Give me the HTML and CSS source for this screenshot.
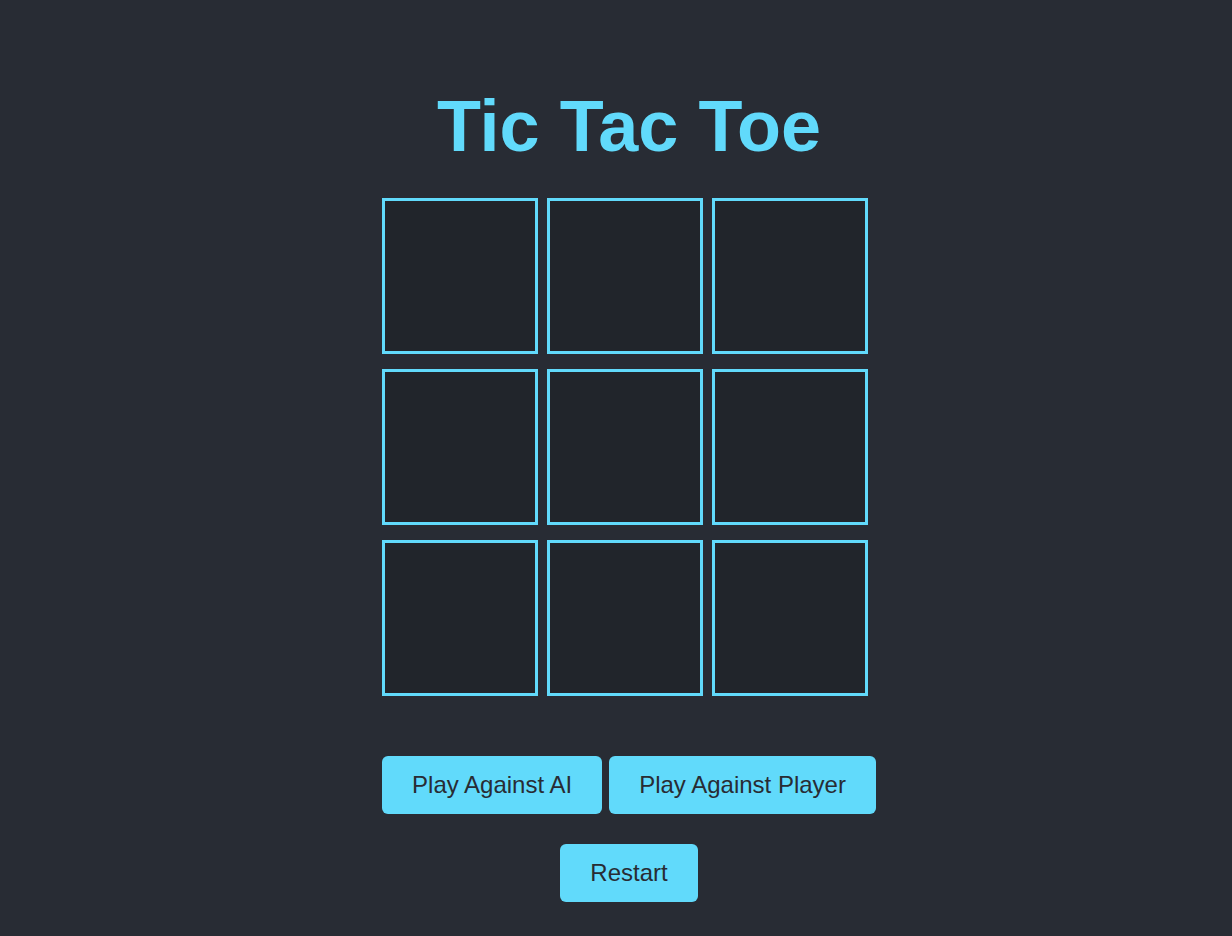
FILE: index.html
```html
<!DOCTYPE html>
<html lang="en">
<head>
<meta charset="utf-8">
<title>Tic Tac Toe</title>
<link rel="stylesheet" href="styles.css">
</head>
<body>
<main class="game">
  <h1 class="title">Tic Tac Toe</h1>
  <div class="board">
    <div class="cell"></div><div class="cell"></div><div class="cell"></div>
    <div class="cell"></div><div class="cell"></div><div class="cell"></div>
    <div class="cell"></div><div class="cell"></div><div class="cell"></div>
  </div>
  <div class="modes">
    <button class="btn">Play Against AI</button>
    <button class="btn">Play Against Player</button>
  </div>
  <div class="controls">
    <button class="btn">Restart</button>
  </div>
</main>
</body>
</html>
```

FILE: styles.css
```css
html, body {
  margin: 0;
  height: 100%;
}
body {
  background: #282c34;
  font-family: "Liberation Sans", Arial, sans-serif;
  padding-left: 26px;
  box-sizing: border-box;
}
.game {
  display: flex;
  flex-direction: column;
  align-items: center;
}
.title {
  margin: 85px 0 0;
  font-size: 72px;
  font-weight: bold;
  color: #61dafb;
  line-height: normal;
}
.board {
  margin-top: 31px;
  display: grid;
  grid-template-columns: repeat(3, 156px);
  column-gap: 9px;
  row-gap: 15px;
  margin-left: -8px;
}
.cell {
  width: 156px;
  height: 156px;
  box-sizing: border-box;
  border: 3px solid #61dafb;
  background: #21252b;
}
.modes {
  margin-top: 60px;
  display: flex;
  gap: 7px;
}
.controls {
  margin-top: 30px;
  display: flex;
}
.btn {
  font-family: "Liberation Sans", Arial, sans-serif;
  font-size: 24px;
  line-height: 28px;
  padding: 15px 30px;
  border: none;
  border-radius: 6px;
  background: #61dafb;
  color: #282c34;
}
```
